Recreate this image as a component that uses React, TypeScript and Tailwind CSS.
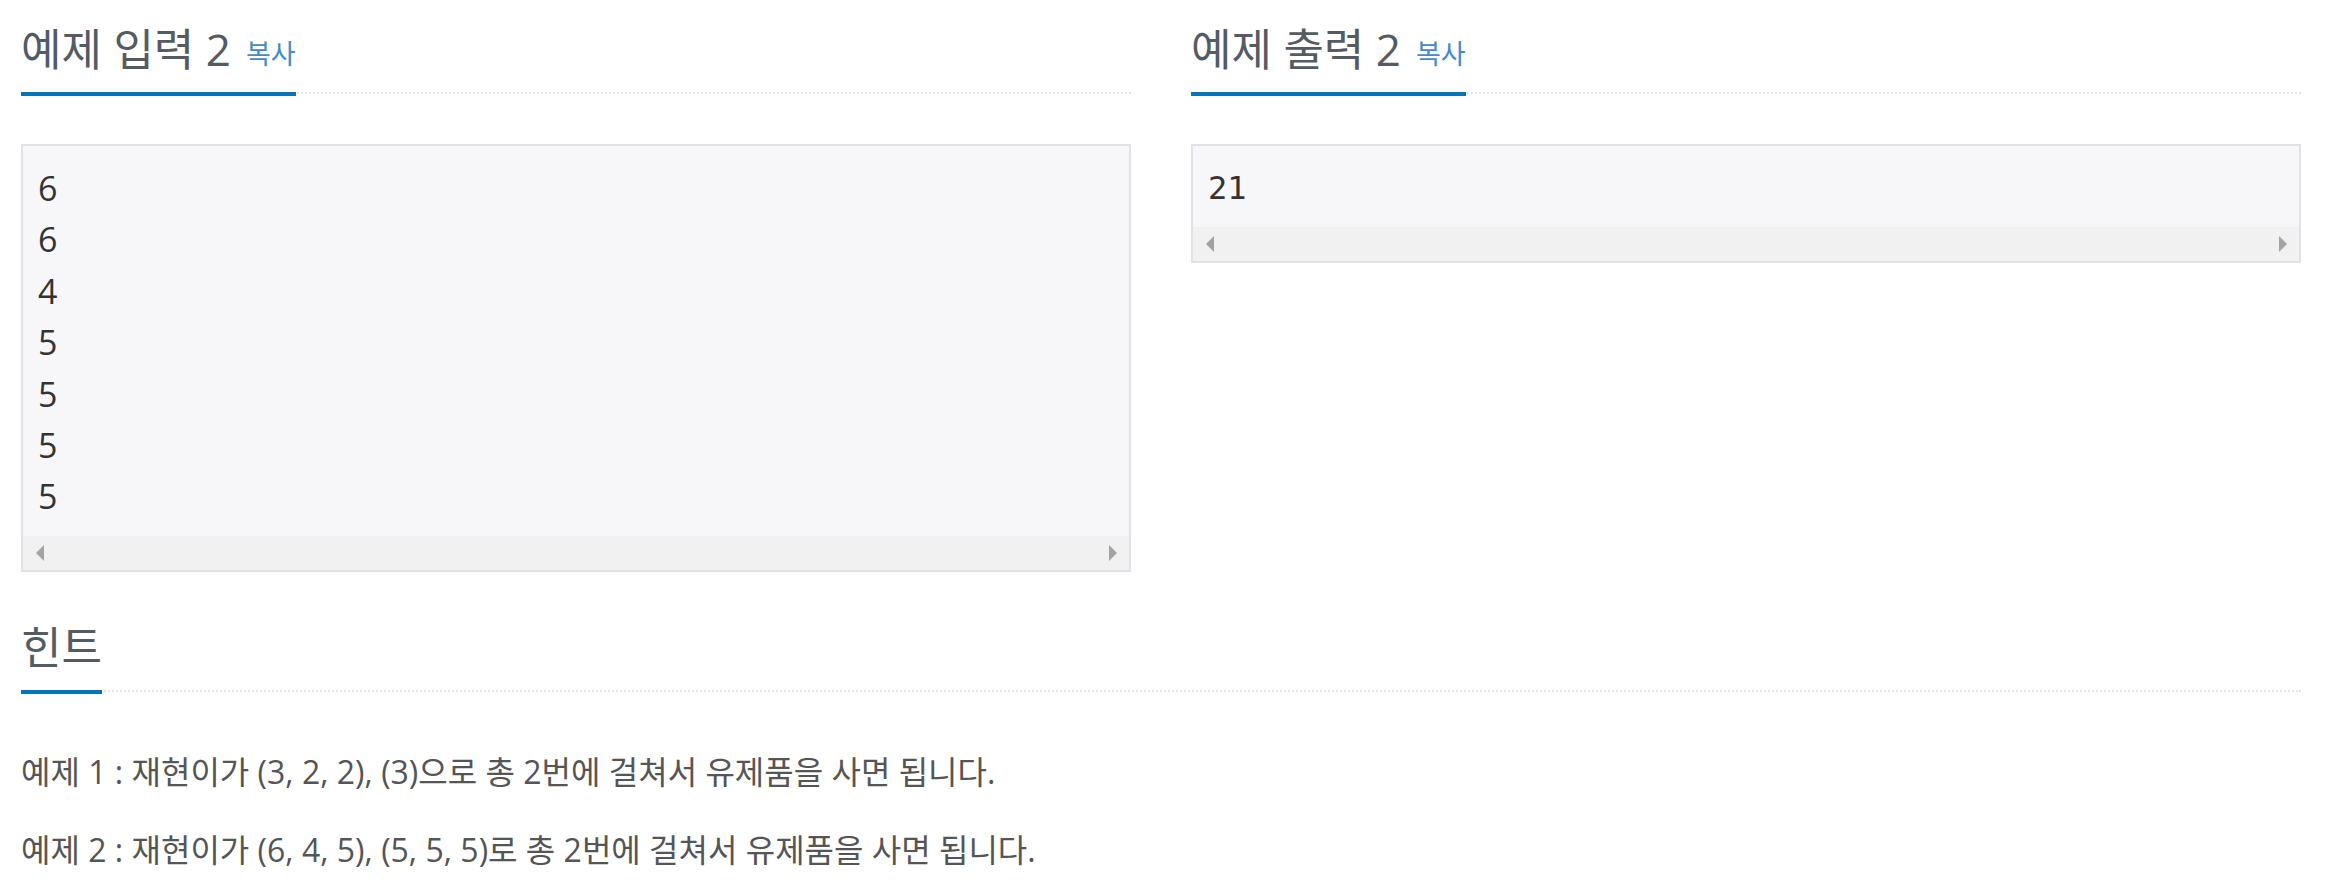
import React from 'react';

// --- Titre de section avec soulignement bleu ---
function Headline({ title, copy }: { title: string; copy?: boolean }) {
  return (
    <div className="flex border-b-2 border-dotted border-[#e1e4e8]">
      <h2 className="-mb-1 border-b-4 border-[#0076c0] pb-[19px] text-[44px] leading-[48px] font-normal text-[#555b62]">
        {title}
        {copy && (
          <span className="ml-[15px] text-[27px] leading-none text-[#428bca] [vertical-align:2px]">복사</span>
        )}
      </h2>
    </div>
  );
}

function Arrow({ dir }: { dir: 'left' | 'right' }) {
  return (
    <svg width="8" height="16" viewBox="0 0 8 16" className="block">
      {dir === 'left' ? <polygon points="8,0 8,16 0,8" fill="#a3a3a3" /> : <polygon points="0,0 0,16 8,8" fill="#a3a3a3" />}
    </svg>
  );
}

// --- Bloc de données d'exemple ---
function SampleBox({ lines, mono }: { lines: string[]; mono?: boolean }) {
  return (
    <div className="mt-[50px] border-2 border-[#e1e1e8] bg-[#f7f7f9]">
      <pre
        className={
          mono
            ? "px-[15px] pt-[17px] pb-[13px] font-['DejaVu_Sans_Mono',monospace] text-[32px] leading-[51.4px] text-[#333]"
            : "px-[15px] pt-[17px] pb-[13px] font-['Open_Sans','Noto_Sans_CJK_KR',sans-serif] text-[34px] leading-[51.4px] text-[#333]"
        }
      >
        {lines.join('\n')}
      </pre>
      <div className="flex h-[34px] items-center justify-between bg-[#f1f1f1] pl-[13px] pr-[12px]">
        <Arrow dir="left" />
        <Arrow dir="right" />
      </div>
    </div>
  );
}

export default function App() {
  return (
    <div className="min-h-screen bg-white pl-[21px] pr-[34px] pt-[25px] font-['Open_Sans','Noto_Sans_CJK_KR',sans-serif]">
      <div className="grid grid-cols-2 gap-[60px]">
        <section>
          <Headline title="예제 입력 2" copy />
          <SampleBox lines={['6', '6', '4', '5', '5', '5', '5']} />
        </section>
        <section className="self-start">
          <Headline title="예제 출력 2" copy />
          <SampleBox lines={['21']} mono />
        </section>
      </div>

      <section className="mt-[51px]">
        <Headline title="힌트" />
        <div className="mt-[58px] space-y-[34px] text-[32px] leading-[44px] text-[#555]">
          <p>예제 1 : 재현이가 (3, 2, 2), (3)으로 총 2번에 걸쳐서 유제품을 사면 됩니다.</p>
          <p>예제 2 : 재현이가 (6, 4, 5), (5, 5, 5)로 총 2번에 걸쳐서 유제품을 사면 됩니다.</p>
        </div>
      </section>
    </div>
  );
}
